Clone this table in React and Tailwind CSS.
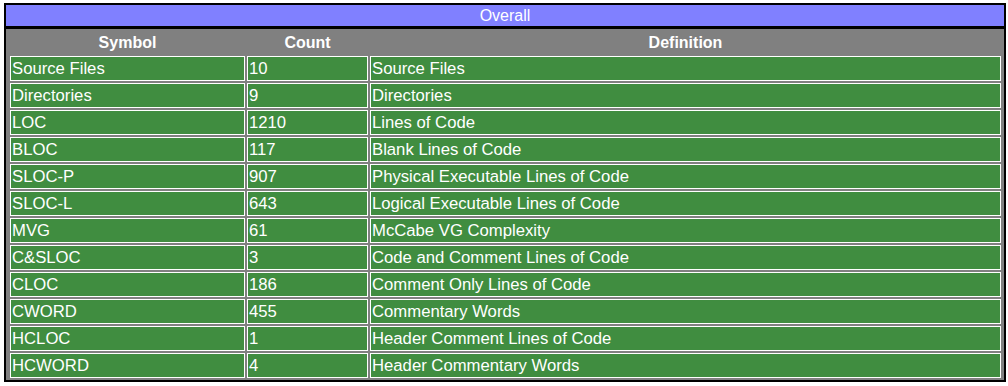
import React from "react";

const rows = [
  ["Source Files", "10", "Source Files"],
  ["Directories", "9", "Directories"],
  ["LOC", "1210", "Lines of Code"],
  ["BLOC", "117", "Blank Lines of Code"],
  ["SLOC-P", "907", "Physical Executable Lines of Code"],
  ["SLOC-L", "643", "Logical Executable Lines of Code"],
  ["MVG", "61", "McCabe VG Complexity"],
  ["C&SLOC", "3", "Code and Comment Lines of Code"],
  ["CLOC", "186", "Comment Only Lines of Code"],
  ["CWORD", "455", "Commentary Words"],
  ["HCLOC", "1", "Header Comment Lines of Code"],
  ["HCWORD", "4", "Header Commentary Words"],
];

export default function App() {
  return (
    <div className="bg-white w-[1008px] h-[386px] pt-[3px] pl-[4px]" style={{ fontFamily: '"Liberation Sans", Arial, sans-serif' }}>
      <div className="w-[1002px] border-2 border-black bg-black">
        <div className="h-[21px] bg-[#8080ff] text-white text-[16px] leading-[21px] text-center">Overall</div>
        <div className="mt-[3px] bg-[#808080] pl-[4px] pr-[3px] py-[2px]">
          <div className="grid grid-cols-[235px_121px_631px] gap-[2px]">
            <div className="h-[23px] flex items-center justify-center text-white font-bold text-[16px]">Symbol</div>
            <div className="h-[23px] flex items-center justify-center text-white font-bold text-[16px]">Count</div>
            <div className="h-[23px] flex items-center justify-center text-white font-bold text-[16px]">Definition</div>
            {rows.map((r, i) => (
              <React.Fragment key={i}>
                {r.map((c, j) => (
                  <div key={j} className="h-[25px] border border-white bg-[#408d40] text-white text-[16.7px] leading-[18px] px-px flex items-center whitespace-nowrap">
                    {c}
                  </div>
                ))}
              </React.Fragment>
            ))}
          </div>
        </div>
      </div>
    </div>
  );
}
